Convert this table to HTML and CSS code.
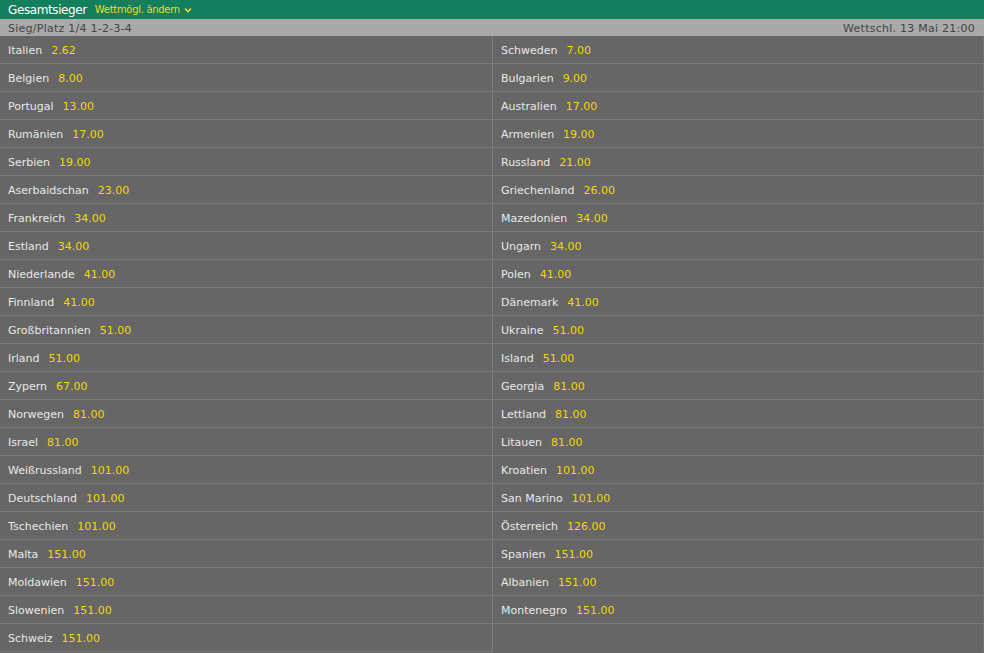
FILE: index.html
```html
<!DOCTYPE html>
<html lang="de">
<head>
<meta charset="utf-8">
<title>Gesamtsieger</title>
<link rel="stylesheet" href="styles.css">
</head>
<body>
<div class="market">
  <div class="header">
    <span class="title">Gesamtsieger</span>
    <span class="change">Wettmögl. ändern
      <svg class="chev" width="8" height="6" viewBox="0 0 8 6"><path d="M1 1.5 L4 4.5 L7 1.5" fill="none" stroke="#e8dc2a" stroke-width="1.6"/></svg>
    </span>
  </div>
  <div class="subbar">
    <span>Sieg/Platz 1/4 1-2-3-4</span>
    <span>Wettschl. 13 Mai 21:00</span>
  </div>
  <div class="grid">
    <div class="col left">
      <div class="cell"><span class="name">Italien</span><span class="odds">2.62</span></div>
      <div class="cell"><span class="name">Belgien</span><span class="odds">8.00</span></div>
      <div class="cell"><span class="name">Portugal</span><span class="odds">13.00</span></div>
      <div class="cell"><span class="name">Rumänien</span><span class="odds">17.00</span></div>
      <div class="cell"><span class="name">Serbien</span><span class="odds">19.00</span></div>
      <div class="cell"><span class="name">Aserbaidschan</span><span class="odds">23.00</span></div>
      <div class="cell"><span class="name">Frankreich</span><span class="odds">34.00</span></div>
      <div class="cell"><span class="name">Estland</span><span class="odds">34.00</span></div>
      <div class="cell"><span class="name">Niederlande</span><span class="odds">41.00</span></div>
      <div class="cell"><span class="name">Finnland</span><span class="odds">41.00</span></div>
      <div class="cell"><span class="name">Großbritannien</span><span class="odds">51.00</span></div>
      <div class="cell"><span class="name">Irland</span><span class="odds">51.00</span></div>
      <div class="cell"><span class="name">Zypern</span><span class="odds">67.00</span></div>
      <div class="cell"><span class="name">Norwegen</span><span class="odds">81.00</span></div>
      <div class="cell"><span class="name">Israel</span><span class="odds">81.00</span></div>
      <div class="cell"><span class="name">Weißrussland</span><span class="odds">101.00</span></div>
      <div class="cell"><span class="name">Deutschland</span><span class="odds">101.00</span></div>
      <div class="cell"><span class="name">Tschechien</span><span class="odds">101.00</span></div>
      <div class="cell"><span class="name">Malta</span><span class="odds">151.00</span></div>
      <div class="cell"><span class="name">Moldawien</span><span class="odds">151.00</span></div>
      <div class="cell"><span class="name">Slowenien</span><span class="odds">151.00</span></div>
      <div class="cell"><span class="name">Schweiz</span><span class="odds">151.00</span></div>
    </div>
    <div class="col right">
      <div class="cell"><span class="name">Schweden</span><span class="odds">7.00</span></div>
      <div class="cell"><span class="name">Bulgarien</span><span class="odds">9.00</span></div>
      <div class="cell"><span class="name">Australien</span><span class="odds">17.00</span></div>
      <div class="cell"><span class="name">Armenien</span><span class="odds">19.00</span></div>
      <div class="cell"><span class="name">Russland</span><span class="odds">21.00</span></div>
      <div class="cell"><span class="name">Griechenland</span><span class="odds">26.00</span></div>
      <div class="cell"><span class="name">Mazedonien</span><span class="odds">34.00</span></div>
      <div class="cell"><span class="name">Ungarn</span><span class="odds">34.00</span></div>
      <div class="cell"><span class="name">Polen</span><span class="odds">41.00</span></div>
      <div class="cell"><span class="name">Dänemark</span><span class="odds">41.00</span></div>
      <div class="cell"><span class="name">Ukraine</span><span class="odds">51.00</span></div>
      <div class="cell"><span class="name">Island</span><span class="odds">51.00</span></div>
      <div class="cell"><span class="name">Georgia</span><span class="odds">81.00</span></div>
      <div class="cell"><span class="name">Lettland</span><span class="odds">81.00</span></div>
      <div class="cell"><span class="name">Litauen</span><span class="odds">81.00</span></div>
      <div class="cell"><span class="name">Kroatien</span><span class="odds">101.00</span></div>
      <div class="cell"><span class="name">San Marino</span><span class="odds">101.00</span></div>
      <div class="cell"><span class="name">Österreich</span><span class="odds">126.00</span></div>
      <div class="cell"><span class="name">Spanien</span><span class="odds">151.00</span></div>
      <div class="cell"><span class="name">Albanien</span><span class="odds">151.00</span></div>
      <div class="cell"><span class="name">Montenegro</span><span class="odds">151.00</span></div>
    </div>
  </div>
</div>
</body>
</html>
```
FILE: styles.css
```css
* { box-sizing: border-box; }
html, body { margin: 0; padding: 0; }
body {
  background: #666666;
  font-family: "DejaVu Sans", Verdana, sans-serif;
  width: 984px;
  height: 653px;
  overflow: hidden;
}
.header {
  height: 19px;
  background: #147f5c;
  display: flex;
  align-items: center;
  padding-left: 8px;
}
.title {
  color: #ffffff;
  font-size: 12px;
  letter-spacing: -0.4px;
}
.change {
  color: #e8dc2a;
  font-size: 10px;
  letter-spacing: -0.3px;
  margin-left: 8px;
  display: flex;
  align-items: center;
  gap: 4px;
}
.chev { display: block; margin-top: 1px; }
.subbar {
  height: 17px;
  background: #a9a9a9;
  color: #454545;
  font-size: 11px;
  letter-spacing: 0.25px;
  display: flex;
  justify-content: space-between;
  align-items: center;
  padding: 2px 9px 0 8px;
}
.grid {
  display: flex;
}
.col {
  display: flex;
  flex-direction: column;
}
.left {
  width: 493px;
  border-right: 1px solid #7c7c7c;
}
.right {
  flex: 1;
  border-right: 1px solid #717171;
}
.cell {
  height: 28px;
  border-bottom: 1px solid #7a7a7a;
  display: flex;
  align-items: center;
  padding: 1px 0 0 8px;
  font-size: 11px;
  gap: 9px;
}
.name { color: #e8e8e8; }
.odds { color: #f2d800; }
```
